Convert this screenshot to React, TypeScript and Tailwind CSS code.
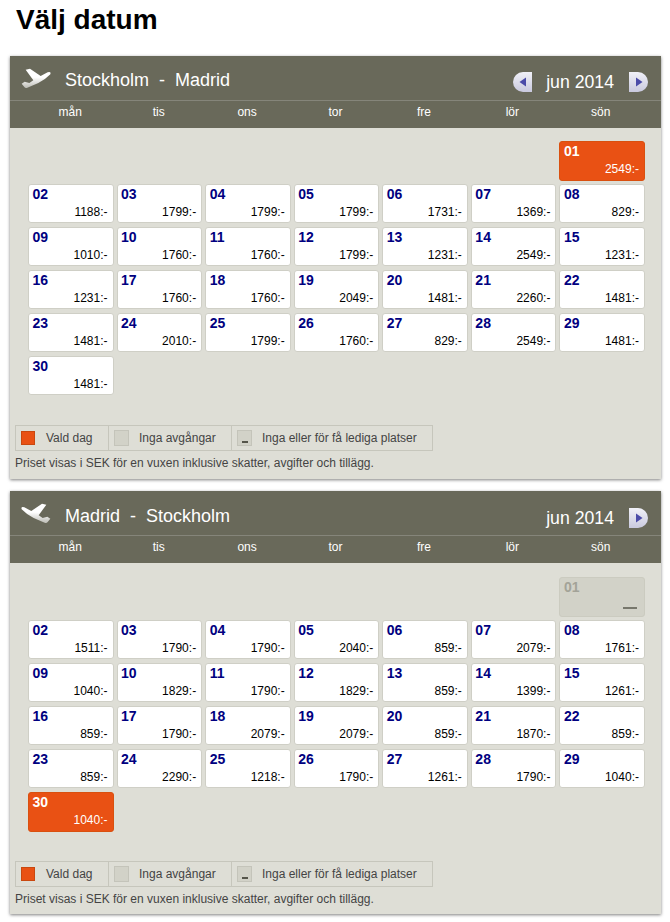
const days = ["mån", "tis", "ons", "tor", "fre", "lör", "sön"];

const outbound = [
  2549, 1188, 1799, 1799, 1799, 1731, 1369, 829, 1010, 1760, 1760, 1799, 1231, 2549, 1231, 1231, 1760, 1760, 2049,
  1481, 2260, 1481, 1481, 2010, 1799, 1760, 829, 2549, 1481, 1481,
];

const homebound = [
  0, 1511, 1790, 1790, 2040, 859, 2079, 1761, 1040, 1829, 1790, 1829, 859, 1399, 1261, 859, 1790, 2079, 2079, 859,
  1870, 859, 859, 2290, 1218, 1790, 1261, 1790, 1040, 1040,
];

function Plane({ flip }: { flip?: boolean }) {
  const id = flip ? "planeB" : "planeA";
  return (
    <svg width="32" height="22" viewBox="30 20 96 66" className={flip ? "-scale-x-100" : ""}>
      <defs>
        <linearGradient id={id} x1="0" y1="0" x2="0" y2="1">
          <stop offset="0.45" stopColor="#ffffff" />
          <stop offset="1" stopColor="#bdbdb6" />
        </linearGradient>
      </defs>
      <path
        d="M47 28 L60 25 L92 47 L113 36 Q124 33 121 42 Q108 56 85 68 L52 82 Q46 84 43 80 L35 70 L44 64 L58 68 L70 60 Z"
        fill={`url(#${id})`}
      />
    </svg>
  );
}

function Arrow({ dir }: { dir: "left" | "right" }) {
  const left = dir === "left";
  return (
    <span
      className={`flex h-[20px] w-[19px] items-center justify-center bg-gradient-to-b from-[#f1f1f8] to-[#c9c9de] ${
        left ? "rounded-l-full" : "rounded-r-full"
      }`}
    >
      <svg width="8" height="10" viewBox="0 0 8 10">
        <path d={left ? "M7 0.5 V9.5 L0.5 5 Z" : "M1 0.5 V9.5 L7.5 5 Z"} fill="#4b4ba8" />
      </svg>
    </span>
  );
}

function Cell({ n, price, selected }: { n: number; price: number; selected: boolean }) {
  const label = String(n).padStart(2, "0");
  if (price === 0) {
    return (
      <div className="relative -mb-[1px] h-[40px] rounded-[3px] border border-[#cbcbc0] bg-[#d2d2c8] pl-[3.5px] pt-[1px]">
        <div className="text-[14px] leading-[17px] font-bold text-[#a3a398]">{label}</div>
        <div className="absolute right-[7px] bottom-[7px] h-[2px] w-[14px] bg-[#77776c]" />
      </div>
    );
  }
  return (
    <div
      className={`rounded-[3px] border pl-[3.5px] pt-[1px] ${
        selected ? "-mb-[1px] h-[40px] border-[#d9500f] bg-[#e95114] text-white" : "h-[39px] border-[#cfcfc6] bg-white"
      }`}
    >
      <div className={`text-[14px] leading-[17px] font-bold ${selected ? "text-white" : "text-[#000080]"}`}>{label}</div>
      <div className={`mt-[2px] pr-[5px] text-right text-[12px] leading-[15px] ${selected ? "text-white" : "text-black"}`}>
        {price}:-
      </div>
    </div>
  );
}

function Panel({
  from,
  to,
  prices,
  selected,
  showPrev,
  flip,
}: {
  from: string;
  to: string;
  prices: number[];
  selected: number;
  showPrev?: boolean;
  flip?: boolean;
}) {
  return (
    <section className="w-[651px] bg-[#deded6] shadow-[0_1px_3px_rgba(0,0,0,0.5)]">
      <div className="flex h-[45px] items-center justify-between border-b border-[#85857a] bg-[#69695a] pr-[13px] pl-[10px] text-white">
        <div className="flex items-center">
          <Plane flip={flip} />
          <span className={`ml-[13px] text-[18px] whitespace-pre ${flip ? "pt-[7px]" : "pt-[5px]"}`}>
            {from}  -  {to}
          </span>
        </div>
        <div className={`flex items-center ${flip ? "pt-[10px]" : "pt-[8px]"}`}>
          {showPrev && <Arrow dir="left" />}
          <span className="mr-[15px] ml-[14px] text-[17.7px]">jun 2014</span>
          <Arrow dir="right" />
        </div>
      </div>
      <div className="grid h-[27px] grid-cols-7 bg-[#69695a] px-[16px] text-center text-[12px] leading-[23px] text-white">
        {days.map((d) => (
          <span key={d}>{d}</span>
        ))}
      </div>
      <div className={`px-[5px] ${flip ? "pt-[14px] pb-[6px]" : "pt-[13px] pb-[7px]"}`}>
        <div className="ml-[13px] grid w-[617px] grid-cols-7 gap-x-[3px] gap-y-[4px]">
          {[0, 1, 2, 3, 4, 5].map((i) => (
            <div key={i} />
          ))}
          {prices.map((p, i) => (
            <Cell key={i} n={i + 1} price={p} selected={i + 1 === selected} />
          ))}
        </div>
        <div className="mt-[30px] flex h-[26px] w-[418px] items-center border border-[#c6c6bc] text-[12px] text-[#444444]">
          <div className="flex h-full w-[93px] items-center border-r border-[#c6c6bc] pl-[5px]">
            <span className="h-[14px] w-[14px] border border-[#c9480f] bg-[#e95114]" />
            <span className="ml-[11px]">Vald dag</span>
          </div>
          <div className="flex h-full w-[123px] items-center border-r border-[#c6c6bc] pl-[5px]">
            <span className="h-[16px] w-[15px] border border-[#c4c4ba] bg-[#d2d2c8]" />
            <span className="ml-[10px]">Inga avgångar</span>
          </div>
          <div className="flex h-full items-center pl-[5px]">
            <span className="relative h-[16px] w-[15px] border border-[#c4c4ba] bg-[#d2d2c8]">
              <span className="absolute right-[3px] bottom-[2px] h-[2px] w-[6px] bg-[#55554a]" />
            </span>
            <span className="ml-[10px]">Inga eller för få lediga platser</span>
          </div>
        </div>
        <p className="mt-[4px] text-[12px] leading-[17px] text-[#444444]">
          Priset visas i SEK för en vuxen inklusive skatter, avgifter och tillägg.
        </p>
      </div>
    </section>
  );
}

export default function App() {
  return (
    <div className="min-h-[922px] bg-white pl-[10px] font-['Liberation_Sans',Arial,sans-serif]">
      <h1 className="pt-[3px] pl-[6px] text-[28px] leading-[34px] font-bold text-black">Välj datum</h1>
      <div className="mt-[19px] flex flex-col gap-[12px]">
        <Panel from="Stockholm" to="Madrid" prices={outbound} selected={1} showPrev />
        <Panel from="Madrid" to="Stockholm" prices={homebound} selected={30} flip />
      </div>
    </div>
  );
}
